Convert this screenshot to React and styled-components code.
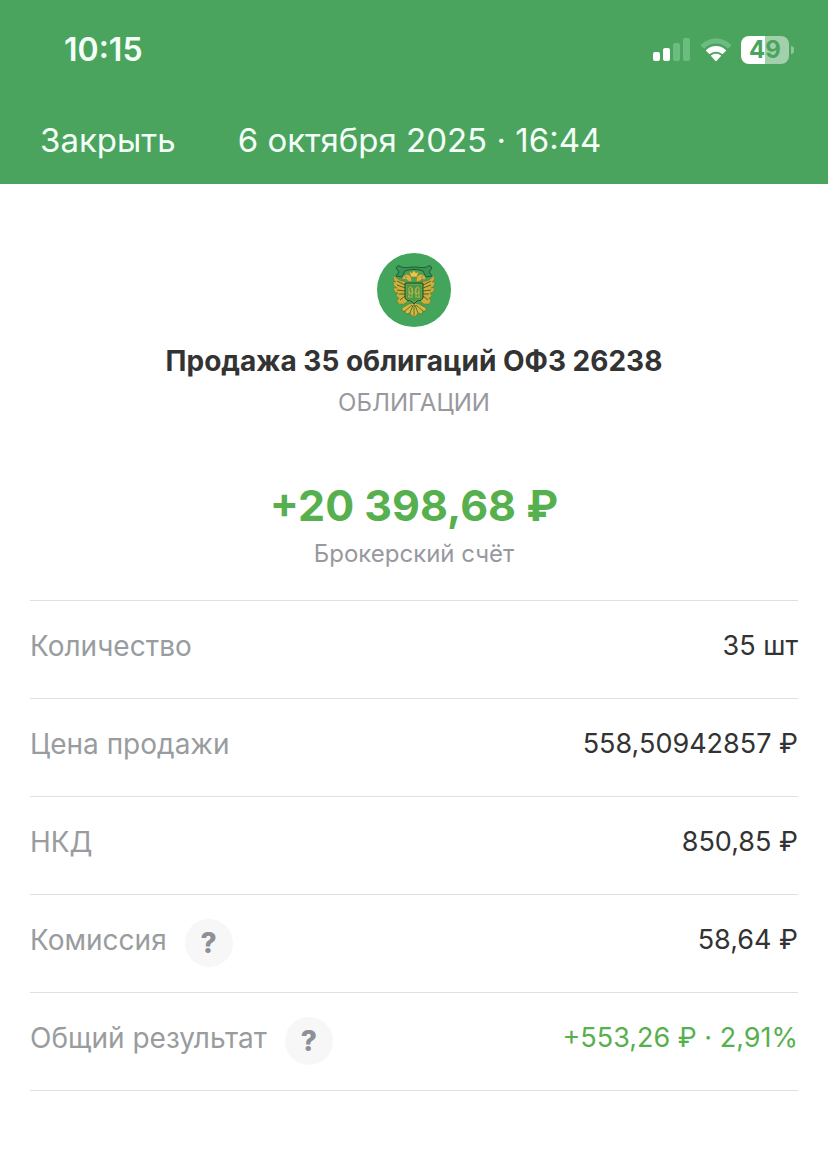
import React from 'react'
import styled, { createGlobalStyle } from 'styled-components'

const GlobalStyle = createGlobalStyle`
    * {
        box-sizing: border-box;
    }
    body {
        margin: 0;
        background: #ffffff;
        color: #333333;
        font-family: Inter, 'Liberation Sans', sans-serif;
    }
    button {
        font-family: inherit;
        border: none;
        padding: 0;
        cursor: pointer;
    }
`

const Header = styled.header`
    background: #4aa45d;
    color: #f4fff8;
`

const StatusBar = styled.div`
    display: flex;
    align-items: center;
    justify-content: space-between;
    height: 100px;
    padding: 0 34px 0 64px;
`

const Clock = styled.time`
    font-size: 32px;
    font-weight: 600;
    line-height: 40px;
`

const StatusIcons = styled.div`
    display: flex;
    align-items: center;
    gap: 9px;
`

const Battery = styled.div`
    display: flex;
    align-items: center;
    gap: 2px;
`

const BatteryBody = styled.div`
    width: 48px;
    height: 28px;
    border-radius: 8px;
    background: linear-gradient(to right, #ffffff 50%, #a1d0ab 50%);
    color: #4aa45d;
    font-size: 24px;
    font-weight: 700;
    line-height: 28px;
    text-align: center;
`

const BatteryCap = styled.div`
    width: 3px;
    height: 8px;
    border-radius: 0 4px 4px 0;
    background: #8cc69a;
`

const NavBar = styled.div`
    display: flex;
    align-items: center;
    gap: 62px;
    height: 84px;
    padding: 0 40px 4px;
`

const CloseButton = styled.button`
    background: none;
    color: inherit;
    font-size: 33px;
    font-weight: 400;
    line-height: 40px;
`

const DateTitle = styled.h1`
    margin: 0;
    font-size: 33px;
    font-weight: 400;
    line-height: 40px;
`

const Content = styled.main`
    padding: 69px 30px 40px;
`

const Summary = styled.section`
    display: flex;
    flex-direction: column;
    align-items: center;
    text-align: center;
`

const Title = styled.h2`
    margin: 16px 0 8px;
    font-size: 28px;
    font-weight: 700;
    line-height: 36px;
`

const Caption = styled.p`
    margin: 0;
    color: #97999e;
    font-size: 24px;
    line-height: 32px;
`

const Amount = styled.p`
    margin: 58px 0 5px;
    color: #57b04e;
    font-size: 43px;
    font-weight: 700;
    line-height: 56px;
`

const Details = styled.dl`
    margin: 30px 0 0;
    border-top: 1px solid #dddfe0;
`

const Row = styled.div`
    display: flex;
    align-items: center;
    justify-content: space-between;
    height: 98px;
    padding-bottom: 8px;
    border-bottom: 1px solid #dddfe0;
    line-height: 36px;
`

const Label = styled.dt`
    display: flex;
    align-items: center;
    gap: 18px;
    color: #999c9f;
    font-size: 28px;
`

const Value = styled.dd`
    margin: 0;
    color: ${({ $positive }) => ($positive ? '#57b04e' : '#333333')};
    font-size: 27px;
`

const HelpButton = styled.button`
    width: 48px;
    height: 48px;
    margin-top: 6px;
    border-radius: 50%;
    background: #f7f7f8;
    color: #8d9095;
    font-size: 28px;
    font-weight: 800;
    line-height: 48px;
`

const details = [
    { id: 1, label: 'Количество', value: '35 шт' },
    { id: 2, label: 'Цена продажи', value: '558,50942857 ₽' },
    { id: 3, label: 'НКД', value: '850,85 ₽' },
    { id: 4, label: 'Комиссия', value: '58,64 ₽', help: true },
    { id: 5, label: 'Общий результат', value: '+553,26 ₽ · 2,91%', help: true, positive: true },
]

const SignalIcon = () => (
    <svg width="38" height="24" viewBox="0 0 38 24" aria-hidden="true">
        <rect x="0" y="14" width="7" height="9" rx="2" fill="#fff" />
        <rect x="10" y="10" width="7" height="13" rx="2" fill="#fff" />
        <rect x="20" y="5" width="7" height="18" rx="2" fill="#6cbc82" />
        <rect x="30" y="0" width="7" height="23" rx="2" fill="#6cbc82" />
    </svg>
)

const WifiIcon = () => (
    <svg width="32" height="24" viewBox="0 0 32 24" aria-hidden="true">
        <path d="M0.5 7.2C9 -1.9 23 -1.9 31.5 7.2L28 10.7C21.5 3.8 10.5 3.8 4 10.7Z" fill="#6cbc82" />
        <path d="M5.7 12.4C11.4 6.5 20.6 6.5 26.3 12.4L22.4 16.3C19 12.8 13 12.8 9.6 16.3Z" fill="#fff" />
        <path d="M10.8 17.8C13.8 15.2 18.2 15.2 21.2 17.8L16.8 22.8Q16 23.5 15.2 22.8Z" fill="#fff" />
    </svg>
)

const EagleWing = () => (
    <g stroke="#6d7428" strokeWidth="0.5" strokeLinejoin="round">
        <path d="M30 29L25 28L22 27L16 22L17 27L19 29L16 29L17 33L20 35L16 35L18 39L21 40L19 43L22 45L20 48L22 51L27 51L31 48Z" fill="#cfae3c" />
        <path d="M20 28L28 32M20 32L28 35M20 37L28 38M22 41L28 41M23 47L28 43" stroke="#4f6527" strokeWidth="1" fill="none" />
        <path d="M35 29L31 28L29 26L25 27L26 23L30 21L34 23Z" fill="#d9b440" />
        <circle cx="29" cy="24" r="0.6" fill="#2b5129" stroke="none" />
    </g>
)

const Emblem = () => (
    <svg width="74" height="74" viewBox="0 0 74 74" role="img" aria-label="ОФЗ">
        <circle cx="37" cy="37" r="37" fill="#43a55c" />
        <path d="M19 15L21 12.5C27 16 32 14 37 14C42 14 47 16 53 12.5L55 15L52 19L55 23L49 24L46 18C41 16 33 16 28 18L25 24L19 23L22 19Z" fill="#3c9351" stroke="#185d36" strokeWidth="1" strokeLinejoin="round" />
        <EagleWing />
        <g transform="translate(74 0) scale(-1 1)">
            <EagleWing />
        </g>
        <path d="M32 18L35 20L37 17L39 20L42 18L40 24L34 24Z" fill="#ecc44a" stroke="#7a7526" strokeWidth="0.5" />
        <path d="M36 50L32 51L25 55L25 58L28 58L29 61L33 60L35 63L37 64L39 63L41 60L45 61L46 58L49 58L49 55L42 51L38 50Z" fill="#d9b840" stroke="#5b702b" strokeWidth="0.6" />
        <path d="M35 52L28 58M36 52L33 60M37 51V63M38 52L41 60M39 52L46 58" stroke="#416d32" strokeWidth="0.9" fill="none" />
        <path d="M28 30L46 30L46 45Q45 48 40 48L37 51L34 48Q29 48 28 45Z" fill="#439a4b" stroke="#284f25" strokeWidth="1" />
        <path d="M29.5 31.5H44.5V45Q43 47 39 47L37 49L35 47Q31 47 29.5 45Z" fill="none" stroke="#8fa23c" strokeWidth="0.6" />
        <path d="M32 44V35M35 45V35M39 45V35M42 44V35M32 35Q34 32 35 36Q37 40 35 41Q32 41 32 38M42 35Q40 32 39 36Q37 40 39 41Q42 41 42 38M31 44H34M40 44H43" fill="none" stroke="#ceb442" strokeWidth="0.9" />
    </svg>
)

const DetailRow = ({ item }) => {
    return (
        <Row>
            <Label>
                {item.label}
                {item.help && <HelpButton type="button" aria-label={`${item.label}: подробнее`}>?</HelpButton>}
            </Label>
            <Value $positive={item.positive}>{item.value}</Value>
        </Row>
    )
}

const App = () => {
    return (
        <>
            <GlobalStyle />
            <Header>
                <StatusBar>
                    <Clock>10:15</Clock>
                    <StatusIcons>
                        <SignalIcon />
                        <WifiIcon />
                        <Battery>
                            <BatteryBody>49</BatteryBody>
                            <BatteryCap />
                        </Battery>
                    </StatusIcons>
                </StatusBar>
                <NavBar>
                    <CloseButton type="button">Закрыть</CloseButton>
                    <DateTitle>6 октября 2025 · 16:44</DateTitle>
                </NavBar>
            </Header>
            <Content>
                <Summary>
                    <Emblem />
                    <Title>Продажа 35 облигаций ОФЗ 26238</Title>
                    <Caption>ОБЛИГАЦИИ</Caption>
                    <Amount>+20 398,68 ₽</Amount>
                    <Caption>Брокерский счёт</Caption>
                </Summary>
                <Details>
                    {details.map((item) => (
                        <DetailRow item={item} key={item.id} />
                    ))}
                </Details>
            </Content>
        </>
    )
}

export default App
